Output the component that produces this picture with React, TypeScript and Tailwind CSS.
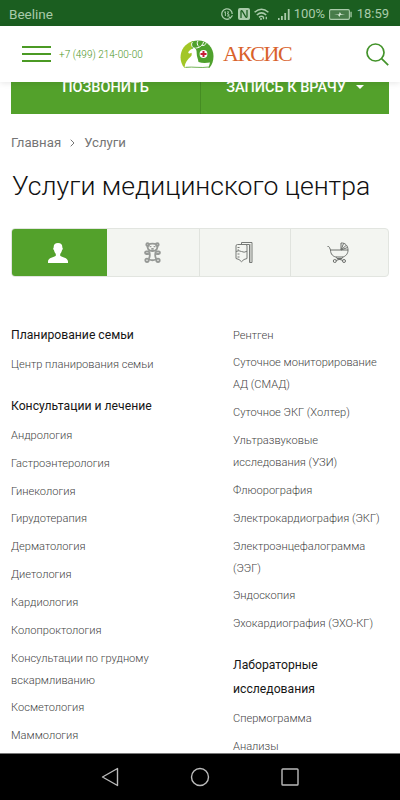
import React from 'react';

type Group = { title?: string; items: string[] };

const leftGroups: Group[] = [
  { title: 'Планирование семьи', items: ['Центр планирования семьи'] },
  {
    title: 'Консультации и лечение',
    items: [
      'Андрология',
      'Гастроэнтерология',
      'Гинекология',
      'Гирудотерапия',
      'Дерматология',
      'Диетология',
      'Кардиология',
      'Колопроктология',
      'Консультации по грудному вскармливанию',
      'Косметология',
      'Маммология',
    ],
  },
];

const rightGroups: Group[] = [
  {
    items: [
      'Рентген',
      'Суточное мониторирование АД (СМАД)',
      'Суточное ЭКГ (Холтер)',
      'Ультразвуковые исследования (УЗИ)',
      'Флюорография',
      'Электрокардиография (ЭКГ)',
      'Электроэнцефалограмма (ЭЭГ)',
      'Эндоскопия',
      'Эхокардиография (ЭХО-КГ)',
    ],
  },
  { title: 'Лабораторные исследования', items: ['Спермограмма', 'Анализы'] },
];

const StatusBar: React.FC = () => (
  <div className="h-[26px] shrink-0 bg-[#1b5e20] flex items-center justify-between pl-[9px] pr-[11px] pt-[2px] text-[#a9cbaa]">
    <span className="text-[13.5px]">Beeline</span>
    <div className="flex items-center">
      <svg className="w-3 h-3" viewBox="0 0 12 12" fill="none" stroke="currentColor">
        <path d="M8.5 10.6A5.2 5.2 0 1 1 11.2 6" strokeWidth="1.3" />
        <path d="M3.2 4.3 4.4 3.7V8M6.2 3.8h1.5L6.3 6h1.5v2H6" strokeWidth="1" />
        <path d="m7.8 8.7 1.5 1.5 2.2-2.8" strokeWidth="1.2" />
      </svg>
      <svg className="w-3 h-3 ml-[5px]" viewBox="0 0 12 12">
        <rect width="12" height="12" rx="2" fill="currentColor" />
        <path d="M3 10V3.5c0-1 .8-1 1.3-.3l3.4 5.6c.5.7 1.3.7 1.3-.3V2" fill="none" stroke="#1b5e20" strokeWidth="1.3" />
      </svg>
      <svg className="w-[15px] h-3 ml-[4px]" viewBox="0 0 15 12" fill="none" stroke="currentColor" strokeWidth="1.5">
        <path d="M.6 4.3q6.9-6.2 13.8 0M2.8 7q4.7-4.2 9.4 0M5 9.4q2.5-2.1 4.4-.4" />
        <path d="M6 11h2M9.5 11.2V8.8M12.3 11.2V8.8" strokeWidth="1.3" />
      </svg>
      <svg className="w-3 h-3 ml-[9px]" viewBox="0 0 12 12" fill="currentColor">
        <path d="M0 10h1.6v2H0zM3 8h1.8v4H3zM6.3 5h1.8v7H6.3zM9.8 1h1.8v11H9.8z" />
      </svg>
      <span className="text-[13px] ml-[4px] w-[31px]">100%</span>
      <svg className="w-[23px] h-[11px] ml-[4px]" viewBox="0 0 23 11">
        <rect x=".6" y=".6" width="19.8" height="9.8" rx="1.3" fill="#477c49" stroke="currentColor" strokeWidth="1.1" />
        <path d="M21.4 2.8h1.3v5.4h-1.3z" fill="currentColor" />
        <path d="m5 5.9 5-.6.8-2.2 1.3 2 4-.1-4.8 1-.9 2.1-1.3-2z" fill="#d5e8d5" />
      </svg>
      <span className="text-[13px] ml-[5px]">18:59</span>
    </div>
  </div>
);

// deer lying in front of a green disc, with a medical cross
const Logo: React.FC = () => (
  <svg className="w-[34px] h-[29px]" viewBox="0 0 34 29">
    <path d="M4.500 28C-2.500 20-.5 5 13 1l5 8-4 18z" fill="#a2c626" />
    <path d="M11.500 1.800C24-3 33.500 6 33.500 16c0 5-1.400 9-4.200 12H15L12 10z" fill="#4fa12d" />
    <path d="M4.500 27.500C5 22.500 7.500 19.500 10.800 16.500c1.200-1.200 1-2.500.7-3.800-1.200.8-2.600.9-3.200.3-.3-1.500 2.500-4 4.700-4.500l1.200-1.300.8 1.400c1.500.6 1.700 2.800 1.700 4.900 0 3.300 1.400 5 1.800 8.500 3.500 1.300 7.500 1.200 11.500.5L28.500 28c-8 .6-16 .1-24-.5z" fill="#fff" />
    <path d="M14.500 8.500C12 7.500 10.500 4.500 12.500 2M15.500 8c3.500 0 7-2 8-6M19 6.700C17 5 16.700 3 18 .8M21.500 5.200c2 .8 4-.2 4.500-2" fill="none" stroke="#fff" strokeWidth="1" />
    <path d="M5.500 27.300c8-.8 15 1 23.500-.3" fill="none" stroke="#4fa12d" strokeWidth=".8" />
    <circle cx="23.500" cy="14" r="3.900" fill="#fff" />
    <path d="M22.500 11h2v2h2v2h-2v2h-2v-2h-2v-2h2z" fill="#c71f35" />
  </svg>
);

const Header: React.FC = () => (
  <header className="relative z-10 h-14 shrink-0 bg-white flex items-center pl-[22px] pr-[11px] shadow-[0_1px_6px_rgba(0,0,0,0.1)]">
    <div className="flex flex-col gap-[5px] w-[29px]">
      <span className="h-[2px] bg-[#4b9a24]" />
      <span className="h-[2px] bg-[#4b9a24]" />
      <span className="h-[2px] bg-[#4b9a24]" />
    </div>
    <span className="ml-[8px] w-[121px] text-[10px] font-light text-[#4c9626] whitespace-nowrap pt-px">+7 (499) 214-00-00</span>
    <Logo />
    <span className="ml-[9px] font-['Liberation_Serif',serif] text-[22px] leading-none text-[#d9622b] tracking-[-1.4px]">
      АКСИС
    </span>
    <svg className="w-[23px] h-[23px] ml-auto" viewBox="0 0 23 23" fill="none" stroke="#43932a" strokeWidth="1.7">
      <circle cx="9.500" cy="9.500" r="8.500" />
      <path d="m15.600 15.600 6.600 6.600" />
    </svg>
  </header>
);

const TeddyIcon = () => (
  <svg className="w-[17px] h-[21px]" viewBox="0 0 17 21" fill="none" stroke="#969996" strokeWidth="1.800">
    <circle cx="3.700" cy="2.600" r="1.400" />
    <circle cx="13.300" cy="2.600" r="1.400" />
    <path d="M4.500 2.500c2-1.300 6-1.300 8 0 2 3 .5 6.500-4 6.500S2.500 5.500 4.500 2.500z" />
    <path d="M6.500 4v1.200M10.500 4v1.200M7.300 6.800h2.400" />
    <path d="M5.200 9.500H2.300c-1.700 0-1.700 2.500 0 2.500h2.600M11.800 9.500h2.900c1.700 0 1.700 2.500 0 2.500h-2.600" />
    <path d="M5 9.500c1 2 1 5-.2 7.500M12 9.500c-1 2-1 5 .2 7.500M5 17.500q3.500 1.500 7 0" />
    <circle cx="3" cy="18.300" r="1.700" />
    <circle cx="14" cy="18.300" r="1.700" />
  </svg>
);

const DripIcon = () => (
  <svg className="w-[18px] h-[21px]" viewBox="0 0 18 21" fill="none" stroke="#777a77" strokeWidth="1">
    <path d="M2.500 2.500h8q1.500 0 1.500 1.500v12.500l-3 1-2.500 2.200L4 17.500l-3-1V4q0-1.500 1.500-1.500zM1 9.500q3-1.500 5.500 0t5.500-.2" />
    <path d="M2.500 5.500h2M2.500 8h1.500M2.500 12h2M2.500 15h2" />
    <path d="M6.500 2.500v-2h10.500v20M14.500 20.500V2.500H8M14.500 20.500H17" />
    <path d="M15.800 2v18" stroke="#b1b4b0" />
  </svg>
);

const StrollerIcon = () => (
  <svg className="w-[22px] h-[21px]" viewBox="0 0 22 21" fill="none" stroke="#6d706d" strokeWidth="1">
    <path d="M.5 4.500q1.500-.3 2 1L3.500 8h17.500c.2 3.500-2.500 7-6 7H10C6 15 3.500 12 3.500 8" />
    <path d="M14 8V1c4.500-.3 7 3 7 7M14 8l2.500-6.500M14 8l5-4.500M14 8l6.500-2.500" />
    <path d="m9 15 1 1.500 6 2M16 15l-1 1.500-6 2M10 16.500h5" />
    <circle cx="7.800" cy="19" r="1.500" />
    <circle cx="17" cy="19" r="1.500" />
  </svg>
);

const Tabs: React.FC = () => (
  <div className="mx-[11px] mt-[26px] h-[49px] flex rounded-[4px] border border-[#e2e5e0] bg-[#f3f5f1] overflow-hidden">
    <div className="w-[95px] bg-[#53a12b] flex items-center justify-center pr-1">
      <svg className="w-5 h-5" viewBox="0 0 20 20" fill="#fff">
        <path d="M10 0c3 0 4.500 1.800 4.300 4.500.8.5.5 2.300-.3 2.700-.3 1.600-1 2.800-1.800 3.500v2c1.500 1.400 7.800 1.800 7.800 5.800V20H0v-1.500c0-4 6.300-4.400 7.800-5.800v-2C7 10 6.300 8.800 6 7.200c-.8-.4-1.100-2.200-.3-2.700C5.500 1.800 7 0 10 0z" />
      </svg>
    </div>
    <div className="w-[93px] border-r border-[#e0e3de] flex items-center justify-center pr-[2px]">
      <TeddyIcon />
    </div>
    <div className="w-[91px] border-r border-[#e0e3de] flex items-center justify-center pr-[3px]">
      <DripIcon />
    </div>
    <div className="flex-1 flex items-center justify-center pr-[3px]">
      <StrollerIcon />
    </div>
  </div>
);

const Column: React.FC<{ groups: Group[] }> = ({ groups }) => (
  <div className="flex flex-col gap-[12px]">
    {groups.map(({ title, items }) => (
      <section key={items[0]}>
        {title && <h2 className="mb-[7px] text-[12.2px] leading-6 text-[#161616]">{title}</h2>}
        <ul className="text-[11.1px] leading-[22px] font-light text-[#444]">
          {items.map((item) => (
            <li key={item} className="mb-[5.850px]">
              {item}
            </li>
          ))}
        </ul>
      </section>
    ))}
  </div>
);

export default function App() {
  return (
    <div className="w-[400px] h-[800px] flex flex-col overflow-hidden bg-white font-[Roboto,sans-serif]">
      <StatusBar />
      <Header />
      <main className="flex-1 min-h-0 overflow-hidden">
        <div className="mx-[11px] h-8 flex bg-[#53a12b] text-white text-[14.5px] font-medium leading-[11px]">
          <div className="w-[190px] border-r border-[#458c23] text-center">ПОЗВОНИТЬ</div>
          <div className="flex-1 flex justify-center gap-[10px]">
            <span>ЗАПИСЬ К ВРАЧУ</span>
            <svg className="w-2 h-1 mt-[3px]" viewBox="0 0 8 4" fill="#fff">
              <path d="M0 0h8L4 4z" />
            </svg>
          </div>
        </div>
        <nav className="mt-[19px] ml-[11px] h-5 flex items-center text-[13.2px] text-[#757575]">
          <span>Главная</span>
          <svg className="w-[5px] h-2 mx-[9px]" viewBox="0 0 5 8" fill="none" stroke="#777">
            <path d="m.7.7 3.300 3.300L.7 7.300" />
          </svg>
          <span>Услуги</span>
        </nav>
        <h1 className="mt-[17px] ml-[12px] h-[32px] leading-[32px] text-[26.6px] font-light text-[#111] whitespace-nowrap">
          Услуги медицинского центра
        </h1>
        <Tabs />
        <div className="mt-[46px] ml-[11px] grid grid-cols-[150px_155px] gap-x-[72px]">
          <Column groups={leftGroups} />
          <div className="pt-[1.500px]">
            <Column groups={rightGroups} />
          </div>
        </div>
      </main>
      <footer className="relative h-[47px] shrink-0 bg-black border-t border-[#777] flex items-center justify-center gap-[71px]">
        <svg className="w-[18px] h-5" viewBox="0 0 18 20" fill="none" stroke="#bbb" strokeWidth="1.400" strokeLinejoin="round">
          <path d="M16.500 1.500v17L1.500 10z" />
        </svg>
        <svg className="w-5 h-5" viewBox="0 0 20 20" fill="none" stroke="#bbb" strokeWidth="1.400">
          <circle cx="10" cy="10" r="8.500" />
        </svg>
        <svg className="w-[18px] h-5" viewBox="0 0 18 20" fill="none" stroke="#bbb" strokeWidth="1.400">
          <rect x="1" y="2" width="16" height="16" rx=".8" />
        </svg>
      </footer>
    </div>
  );
}
